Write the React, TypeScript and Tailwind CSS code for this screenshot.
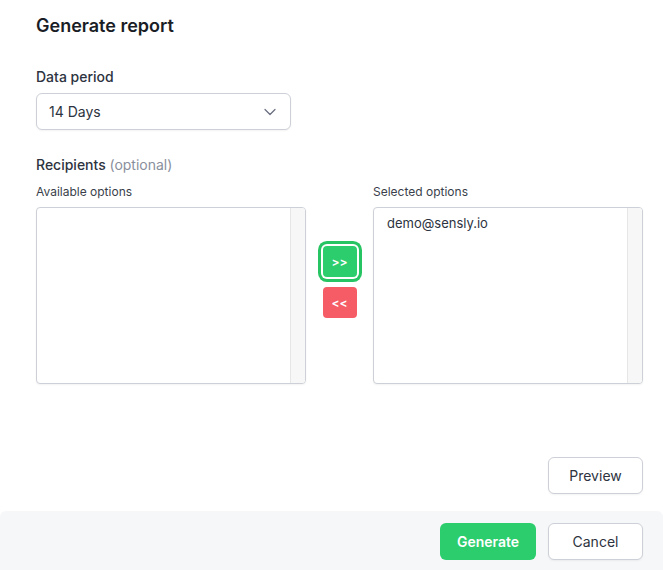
import { ChevronDown } from "lucide-react";

function OptionList({ label, items }: { label: string; items: string[] }) {
  return (
    <div className="w-[270px] flex flex-col">
      <div className="text-[12px] leading-[16px] text-[#3a3f4b]">{label}</div>
      <div className="mt-[7px] h-[177px] flex border border-[#cdd0d7] rounded-[4px] bg-white shadow-[0_1px_2px_rgba(0,0,0,0.05)] overflow-hidden">
        <ul className="flex-1 pt-[6px] pl-[13px]">
          {items.map((item) => (
            <li key={item} className="text-[13px] leading-[18px] text-[#2d3340]">
              {item}
            </li>
          ))}
        </ul>
        <div className="w-[15px] bg-[#f7f7f7] border-l border-[#e6e6e6]" />
      </div>
    </div>
  );
}

export default function App() {
  return (
    <div className="w-[663px] h-[570px] bg-white flex flex-col font-['Inter',sans-serif] text-[#1f2430]">
      <div className="flex-1 pl-9 pr-5 pt-[14px]">
        <h2 className="text-[18px] leading-[24px] font-semibold text-[#1a1d26]">Generate report</h2>

        <div className="mt-[29px] text-[14px] leading-[20px] font-medium text-[#2d3340]">Data period</div>
        <button className="mt-[6px] w-[255px] h-[37px] flex items-center justify-between pl-[12px] pr-[10px] border border-[#cdd0d7] rounded-md bg-white shadow-[0_1px_2px_rgba(0,0,0,0.05)]">
          <span className="text-[14px] text-[#2d3340]">14 Days</span>
          <ChevronDown size={20} strokeWidth={1.5} className="text-[#6b7080]" />
        </button>

        <div className="mt-[25px] text-[14px] leading-[20px] font-medium text-[#2d3340]">
          Recipients <span className="font-normal text-[#8a8f9c]">(optional)</span>
        </div>

        <div className="mt-[9px] flex items-start">
          <OptionList label="Available options" items={[]} />
          <div className="flex-1 flex flex-col items-center gap-[10px] pt-[62px]">
            <button className="w-[34px] h-[31px] rounded-[4px] bg-[#2ccd6d] text-white text-[12px] font-semibold ring-[3px] ring-[#27c463] ring-offset-2">
              &gt;&gt;
            </button>
            <button className="w-[34px] h-[31px] rounded-[4px] bg-[#f55c65] text-white text-[12px] font-semibold">
              &lt;&lt;
            </button>
          </div>
          <OptionList label="Selected options" items={["demo@sensly.io"]} />
        </div>

        <div className="mt-[73px] flex justify-end">
          <button className="w-[95px] h-[37px] border border-[#cdd0d7] rounded-md bg-white text-[14px] text-[#2d3340] shadow-[0_1px_2px_rgba(0,0,0,0.05)]">
            Preview
          </button>
        </div>
      </div>

      <div className="h-[59px] bg-[#f6f7f9] rounded-t-[6px] pl-9 pr-5 pt-[12px] flex justify-end gap-3 items-start">
        <button className="w-[96px] h-[37px] rounded-md bg-[#2ccd6d] text-white text-[14px] font-semibold">
          Generate
        </button>
        <button className="w-[95px] h-[37px] border border-[#cdd0d7] rounded-md bg-white text-[14px] text-[#2d3340] shadow-[0_1px_2px_rgba(0,0,0,0.05)]">
          Cancel
        </button>
      </div>
    </div>
  );
}
